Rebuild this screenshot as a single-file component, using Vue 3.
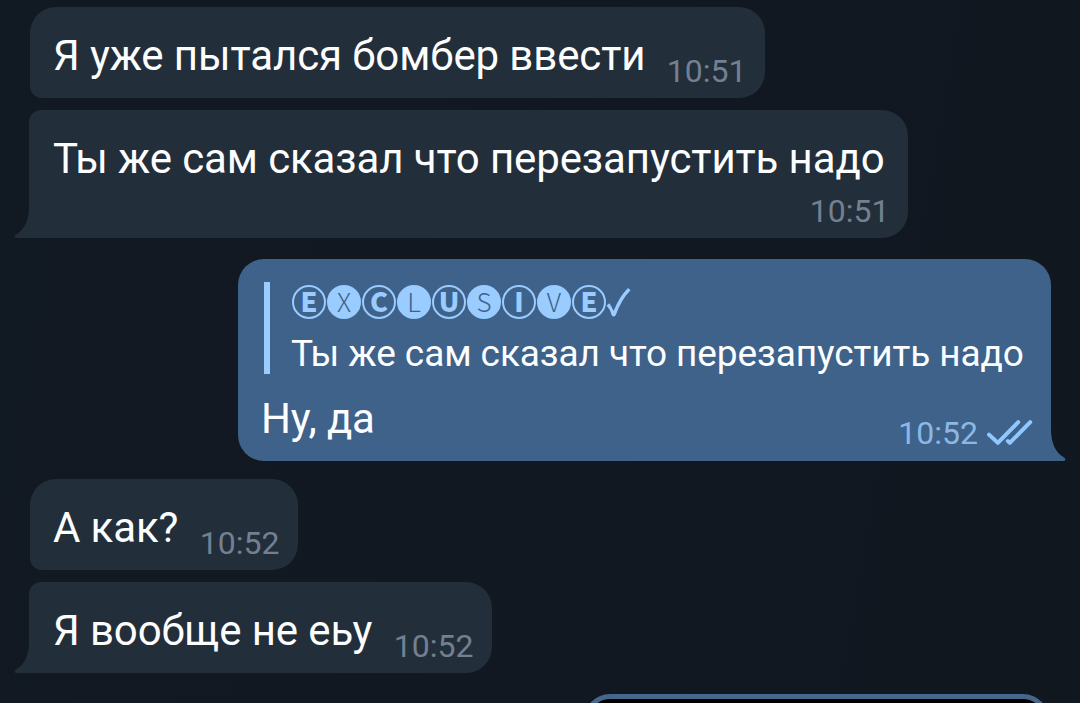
<template>
  <div class="chat">
    <div
      v-for="msg in messages"
      :key="msg.id"
      class="bubble"
      :class="[msg.out ? 'out' : 'in', msg.kind, { last: msg.tail }]"
    >
      <div v-if="msg.reply" class="reply">
        <div class="reply-name">
          <span
            v-for="(letter, i) in msg.reply.name"
            :key="i"
            class="letter"
            :class="{ filled: i % 2 === 1 }"
          >{{ letter }}</span>
          <svg class="name-check" width="27" height="34" viewBox="0 0 27 34">
            <path d="M1.5 20.5 L4.5 18.2 Q7 22 8.6 26 Q14 12 23 3 L25.5 5.2 Q16 15 10.6 30.5 Q8.4 32.4 6.8 30.5 Q5.5 24.5 1.5 20.5 Z" fill="currentColor" />
          </svg>
        </div>
        <div class="reply-text">{{ msg.reply.text }}</div>
      </div>

      <span class="text">{{ msg.text }}</span>
      <span class="meta">
        <span class="time">{{ msg.time }}</span>
        <svg v-if="msg.out" class="ticks" width="46" height="26" viewBox="0 0 46 26">
          <path d="M2 14.6 L10.8 22.8 L31.2 2.2 M20.8 21 L22.8 22.8 L43.2 2.2" />
        </svg>
      </span>

      <svg v-if="msg.tail" class="tail" width="16" height="40" viewBox="0 0 16 40">
        <path d="M16 0 H15 V8 Q15 29 2 36.5 Q0.6 37.5 0.6 38.5 Q0.8 40 2.5 40 H16 Z" />
      </svg>
    </div>

    <div class="media"></div>
  </div>
</template>

<script setup>
const messages = [
  { id: 1, kind: "try", text: "Я уже пытался бомбер ввести", time: "10:51" },
  { id: 2, kind: "restart", text: "Ты же сам сказал что перезапустить надо", time: "10:51", tail: true },
  {
    id: 3,
    kind: "answer",
    out: true,
    tail: true,
    text: "Ну, да",
    time: "10:52",
    reply: { name: "EXCLUSIVE", text: "Ты же сам сказал что перезапустить надо" },
  },
  { id: 4, kind: "how", text: "А как?", time: "10:52" },
  { id: 5, kind: "dunno", text: "Я вообще не еьу", time: "10:52", tail: true },
];
</script>

<style>
body {
  background: #111821;
}
</style>

<style scoped>
.chat {
  box-sizing: border-box;
  height: 703px;
  padding: 7px 29px 0;
  display: flex;
  flex-direction: column;
  align-items: flex-start;
  overflow: hidden;
  background: linear-gradient(100deg, #111923, #111822 60%, #10171e);
  font-family: Roboto, sans-serif;
}

.bubble {
  position: relative;
  box-sizing: border-box;
  flex-shrink: 0;
  display: flex;
  align-items: flex-end;
  justify-content: space-between;
  height: 91px;
  padding: 0 18.5px 8px 24px;
  white-space: nowrap;
}

.in {
  background: #222e3a;
  color: #fcfdfe;
  border-radius: 12px 26px 26px 12px;
}
.in.last { border-radius: 12px 26px 26px 0; }

.try {
  width: 735px;
  margin-left: 1px;
  padding-left: 23px;
  border-top-left-radius: 26px;
}
.restart {
  width: 879px;
  height: 128px;
  margin-top: 12px;
  padding-top: 24px;
  flex-direction: column;
  align-items: stretch;
}
.restart .meta { align-self: flex-end; }
.how {
  width: 268px;
  margin: 18px 0 0 1px;
  padding-left: 23px;
  border-top-left-radius: 26px;
}
.dunno {
  width: 463px;
  margin-top: 12px;
}

.out {
  align-self: flex-end;
  background: #3f628a;
  color: #fcfdfe;
  border-radius: 26px 26px 0 26px;
}
.answer {
  width: 813px;
  height: 202px;
  margin-top: 21px;
  flex-wrap: wrap;
  align-content: flex-start;
  padding: 23px 18px 0 23px;
}

.text {
  font-size: 42px;
  line-height: 50px;
  letter-spacing: -0.11px;
  margin-bottom: 9px;
}
.restart .text { margin: 0; }

.meta {
  display: flex;
  align-items: center;
  color: #738091;
}
.time {
  font-size: 32px;
  line-height: 38px;
}
.out .meta { color: #8bb9e6; }
.ticks {
  margin-left: 9px;
  fill: none;
  stroke: #8fc8ff;
  stroke-width: 4;
  stroke-linecap: round;
  stroke-linejoin: round;
}

.reply {
  box-sizing: border-box;
  width: 100%;
  height: 92px;
  margin-left: 3px;
  padding-left: 22px;
  border-left: 6px solid #9accff;
}
.reply-name {
  display: flex;
  align-items: center;
  gap: 1px;
  height: 40px;
  color: #9accff;
}
.letter {
  box-sizing: border-box;
  width: 34px;
  height: 34px;
  border: 2px solid #9accff;
  border-radius: 50%;
  font: 900 27px/28px "Noto Sans CJK JP", "Noto Sans", sans-serif;
  text-align: center;
}
.filled {
  background: #9accff;
  color: #3f628a;
  font-weight: 300;
  font-size: 26px;
}
.name-check { margin-left: -2px; }
.reply-text {
  font-size: 37px;
  line-height: 44px;
  letter-spacing: -0.09px;
  margin: 10px 0 0 -1px;
}
.answer .text { margin: 20px 0 0; }
.answer .meta { margin-bottom: -8px; }

.tail {
  position: absolute;
  bottom: 0;
  left: -15px;
  fill: #222e3a;
}
.out .tail {
  left: auto;
  right: -15px;
  transform: scaleX(-1);
  fill: #3f628a;
}

/* top edge of the next picture message */
.media {
  box-sizing: border-box;
  flex-shrink: 0;
  align-self: flex-end;
  width: 465px;
  height: 120px;
  margin: 21px 2px 0 0;
  background: #000;
  border: 5px solid #46668b;
  border-radius: 26px;
}
</style>
